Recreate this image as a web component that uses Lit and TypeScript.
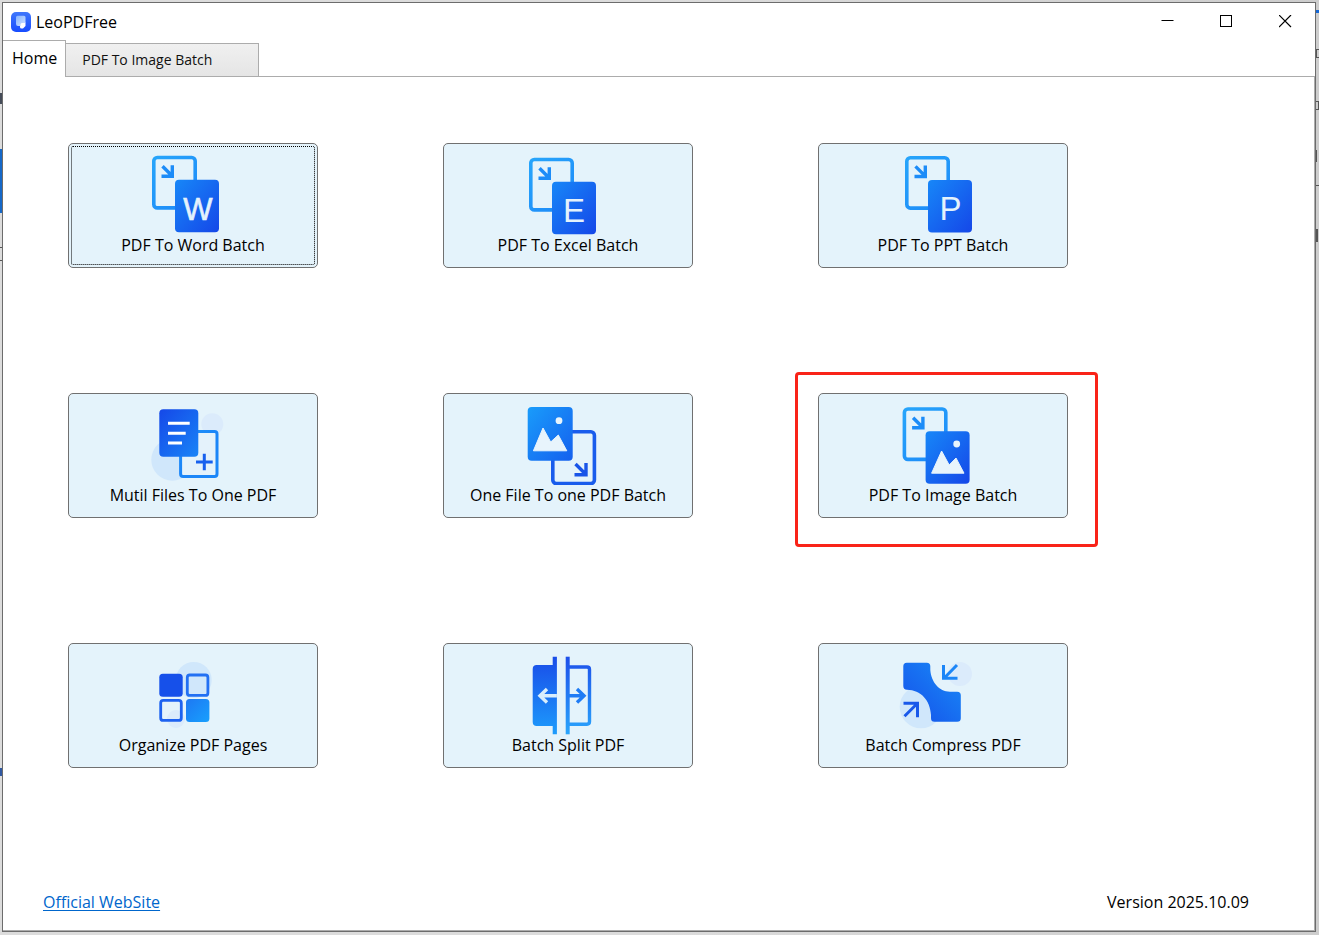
import { LitElement, html, svg, css, nothing } from "lit";
import { customElement, property, state } from "lit/decorators.js";

type Tool = { icon: string; label: string; marked?: boolean };

const TOOLS: Tool[] = [
  { icon: "word", label: "PDF To Word Batch" },
  { icon: "excel", label: "PDF To Excel Batch" },
  { icon: "ppt", label: "PDF To PPT Batch" },
  { icon: "merge", label: "Mutil Files To One PDF" },
  { icon: "single", label: "One File To one PDF Batch" },
  { icon: "image", label: "PDF To Image Batch", marked: true },
  { icon: "organize", label: "Organize PDF Pages" },
  { icon: "split", label: "Batch Split PDF" },
  { icon: "compress", label: "Batch Compress PDF" },
];

// Outlined page with an arrow, partly covered by a filled page.
const convertPages = (x: number, y: number) => svg`
  <g transform="translate(${x} ${y})">
    <rect x="1.8" y="1.8" width="41.4" height="50.4" rx="3.5" fill="none" stroke="url(#sky)" stroke-width="3.6"/>
    <path d="M10.5 10.5 20 20M20.3 9.5V20.6H9.5" fill="none" stroke="#1c8cf8" stroke-width="3.4"/>
    <rect x="23" y="24" width="44" height="52.6" rx="4" fill="url(#deep)"/>
  </g>`;

const ICONS: Record<string, unknown> = {
  word: svg`${convertPages(9, 2.7)}<text class="letter bold" x="54.8" y="67" font-size="31">W</text>`,
  excel: svg`${convertPages(11, 4.7)}<text class="letter" x="56" y="68.5" font-size="33">E</text>`,
  ppt: svg`${convertPages(12, 2.9)}<text class="letter" x="57.5" y="67" font-size="33">P</text>`,
  image: svg`${convertPages(9.6, 4.2)}
    <circle cx="63.7" cy="41" r="3.4" fill="#e8f4fc"/>
    <path d="M38.6 70.2 48.6 48 56.2 62 63 55 71 70.2Z" fill="#e8f4fc" stroke="#e8f4fc" stroke-width="1" stroke-linejoin="round"/>`,
  merge: svg`<g transform="translate(-2 0)">
    <circle cx="31.3" cy="56.7" r="21" fill="#d0e7fb"/>
    <circle cx="71.3" cy="21.3" r="11" fill="#dbebfb"/>
    <rect x="39.6" y="28.4" width="36.4" height="45" rx="2.5" fill="#e4f2fb" stroke="url(#sky)" stroke-width="3"/>
    <rect x="18.3" y="6.3" width="39" height="47.5" rx="4" fill="url(#rise)"/>
    <path d="M27 20.3H48.7M27 30.3H44.7M27 40H41" stroke="#fff" stroke-width="3"/>
    <path d="M55 59H71.7M63.3 50.7V67.3" stroke="#1760ee" stroke-width="3"/></g>`,
  single: svg`
    <rect x="34.8" y="28.8" width="41.6" height="51.8" rx="3.5" fill="none" stroke="#195cec" stroke-width="3.6"/>
    <rect x="9.7" y="4" width="45" height="53.8" rx="4" fill="url(#bright)"/>
    <circle cx="41" cy="17.7" r="3.4" fill="#e8f4fc"/>
    <path d="M15.4 47.8 25 25 32.7 39 40.3 32 48.8 47.8Z" fill="#e8f4fc" stroke="#e8f4fc" stroke-width="1" stroke-linejoin="round"/>
    <path d="M57.5 61 67.5 71M68 60V71.7H56.5" fill="none" stroke="#1854e8" stroke-width="3.4"/>`,
  organize: svg`<g transform="translate(-2 0)">
    <circle cx="52.7" cy="27" r="18" fill="#d0e7fb"/>
    <circle cx="35" cy="66" r="9" fill="#dbebfb"/>
    <rect x="18.3" y="20.7" width="23.4" height="23" rx="3.5" fill="#1650ea"/>
    <rect x="46.3" y="22" width="20.6" height="20.4" rx="2.5" fill="none" stroke="#2270f3" stroke-width="2.8"/>
    <rect x="19.7" y="47.4" width="20.6" height="20" rx="2.5" fill="none" stroke="#1d62f0" stroke-width="2.8"/>
    <rect x="45" y="46" width="23.4" height="23" rx="3.5" fill="url(#sq)"/></g>`,
  split: svg`
    <path d="M34.7 3.7H38.9V81.3H34.7V73H18.7Q14.7 73 14.7 69V16Q14.7 12 18.7 12H34.7Z" fill="url(#drop)"/>
    <path d="M49.7 3.7V81.3" stroke="url(#dropU)" stroke-width="4"/>
    <path d="M50 14H69Q71.5 14 71.5 16.5V68.5Q71.5 71.2 69 71.2H50" fill="none" stroke="url(#dropU)" stroke-width="3.4"/>
    <path d="M38.9 42.7H22.5M29 36 22 42.7 29 49.4" fill="none" stroke="#d9eefc" stroke-width="3.4"/>
    <path d="M50 42.7H66M59 36 66 42.7 59 49.4" fill="none" stroke="#1f7cf5" stroke-width="3.4"/>`,
  compress: svg`
    <circle cx="28" cy="54" r="21.3" fill="#d0e7fb"/>
    <circle cx="67" cy="21" r="12" fill="#dbebfb"/>
    <path d="M13.8 9.7H33.8Q37.3 9.7 37.3 13.2V17C38.3 29 46 38.7 57 38.7H64.2Q67.8 38.7 67.8 42.2V65.3Q67.8 68.8 64.2 68.8H41.5Q38 68.8 38 65.3V62C37 47 28 37 14 36.7Q10.3 36.5 10.3 33V13.2Q10.3 9.7 13.8 9.7Z" fill="url(#cross)"/>
    <path d="M64 12 51.5 24.8M50.5 12V25.3H64.5" fill="none" stroke="#1c86f7" stroke-width="3"/>
    <path d="M11.5 63.2 24 50.7M10.5 50.2H24.5V64.2" fill="none" stroke="#1858ea" stroke-width="3"/>`,
};

@customElement("tool-tile")
export class ToolTile extends LitElement {
  @property() icon = "";
  @property() label = "";
  @property({ type: Boolean, reflect: true }) marked = false;
  @property({ type: Boolean }) current = false;

  static styles = css`
    :host { display: block; position: relative; }
    :host([marked])::after {
      content: "";
      position: absolute;
      inset: -21px -30px -29px -23px;
      border: 3px solid #f92318;
      border-radius: 4px;
      pointer-events: none;
    }
    .tile {
      display: flex;
      flex-direction: column;
      align-items: center;
      box-sizing: border-box;
      width: 100%;
      min-height: 125px;
      padding: 9px 8px;
      border: 1px solid #707070;
      border-radius: 5px;
      background: #e4f3fb;
      color: #000;
      font: inherit;
      line-height: 20px;
      outline: none;
    }
    .current { outline: 1px dotted #000; outline-offset: -4px; }
    .tile svg { display: block; width: 100px; height: 82px; flex: none; }
    .letter { fill: #e4f2fc; text-anchor: middle; font-family: "Liberation Sans", Arial, sans-serif; }
    .bold { stroke: #e4f2fc; stroke-width: 0.6; }
  `;

  render() {
    return html`<button type="button" class="tile ${this.current ? "current" : ""}">
      <svg viewBox="0 0 100 82" aria-hidden="true">
        <defs>
          <linearGradient id="sky" gradientUnits="userSpaceOnUse" x1="0" y1="0" x2="50" y2="55"><stop stop-color="#27a6fb"/><stop offset="1" stop-color="#1b86f8"/></linearGradient>
          <linearGradient id="deep" x1="0" y1="0" x2="1" y2="1"><stop stop-color="#1787f8"/><stop offset="1" stop-color="#1547e8"/></linearGradient>
          <linearGradient id="rise" x1="0" y1="0" x2="1" y2="1"><stop stop-color="#1548e8"/><stop offset="1" stop-color="#1984f7"/></linearGradient>
          <linearGradient id="bright" x1="0" y1="0" x2="1" y2="1"><stop stop-color="#199cfb"/><stop offset="1" stop-color="#1560ee"/></linearGradient>
          <linearGradient id="sq" x1="0" y1="0" x2="1" y2="1"><stop stop-color="#1d78f3"/><stop offset="1" stop-color="#18a0fd"/></linearGradient>
          <linearGradient id="drop" x1="0" y1="0" x2="0" y2="1"><stop stop-color="#194ce8"/><stop offset="1" stop-color="#1d9cfc"/></linearGradient>
          <linearGradient id="dropU" gradientUnits="userSpaceOnUse" x1="0" y1="4" x2="0" y2="81"><stop stop-color="#1d50ea"/><stop offset="1" stop-color="#2aa5fc"/></linearGradient>
          <linearGradient id="cross" x1="0" y1="1" x2="1" y2="0"><stop stop-color="#154fe9"/><stop offset="1" stop-color="#198cf8"/></linearGradient>
        </defs>
        ${ICONS[this.icon] ?? nothing}
      </svg>
      <span>${this.label}</span>
    </button>`;
  }
}

@customElement("app-root")
export class AppRoot extends LitElement {
  @state() private tab = 0;

  static styles = css`
    :host {
      display: flex;
      position: relative;
      box-sizing: border-box;
      min-height: 100vh;
      padding: 2px 3px 3px 2px;
      overflow: hidden;
      background: linear-gradient(to right, #dcdcdc 50%, #cdcdcd);
      color: #000;
      font-family: "Open Sans", "Noto Sans", sans-serif;
      font-size: 16px;
      line-height: 20px;
    }
    .behind { position: absolute; inset: 0 0 0 auto; width: 3px; overflow: hidden; }
    .behind i { position: absolute; right: 0; box-sizing: border-box; width: 3px; border: 0 solid #555; }
    .behind .accent { top: 10px; height: 3px; background: #1668d6; }
    .behind .p1 { top: 49px; height: 9px; border-width: 1px 0 1px 1px; }
    .behind .p2 { top: 101px; height: 9px; border-width: 1px 1px 1px 0; }
    .behind .p3 { top: 150px; height: 12px; border-width: 0 0 0 1px; }
    .behind .p4 { top: 185px; height: 1px; border-width: 1px 0 0; }
    .behind .p5 { top: 229px; height: 13px; border-width: 0 0 0 2px; }
    .left { inset: 0 auto 0 0; width: 2px; }
    .left .q1 { top: 93px; height: 11px; background: #454c58; }
    .left .q2 { top: 149px; height: 64px; background: #1668c8; }
    .left .q3 { top: 247px; height: 14px; border-width: 1px 0; }
    .left .q4 { top: 768px; height: 8px; background: #3058a0; }
    .window {
      position: relative;
      display: flex;
      flex: 1;
      flex-direction: column;
      min-width: 0;
      border: 1px solid #6c6c6c;
      background: #fff;
    }
    header { display: flex; align-items: center; height: 37px; padding-left: 8px; }
    .logo { width: 20px; height: 20px; margin-right: 5px; }
    h1 { flex: 1; margin: 0; font-size: 16px; font-weight: 400; }
    .control { display: grid; place-items: center; width: 59px; height: 37px; padding: 0; border: 0; background: none; }
    .control svg { width: 13px; height: 13px; }
    .tabs { display: flex; align-items: flex-end; height: 37px; box-shadow: inset 0 -1px #acacac; }
    .tab {
      height: 34px;
      padding: 0 46px 0 16px;
      border: 1px solid #acacac;
      border-left: 0;
      background: linear-gradient(#f0f0f0, #e5e5e5);
      color: #111;
      font: inherit;
      font-size: 14px;
      text-align: left;
    }
    .home {
      height: 37px;
      padding: 0 8px 2px 9px;
      border-bottom: 0;
      background: #fff;
      color: #000;
      font-size: 16px;
    }
    main { flex: 1; padding: 66px 65px; border-right: 1px solid #acacac; }
    .grid { display: grid; grid-template-columns: repeat(3, minmax(0, 250px)); gap: 125px; }
    footer {
      display: flex;
      justify-content: space-between;
      padding: 0 65px 18px 40px;
      border-right: 1px solid #acacac;
      border-bottom: 1px solid #acacac;
    }
    a { color: #0066cc; text-underline-offset: 2px; }
  `;

  render() {
    return html`
      <div class="behind" aria-hidden="true">
        <i class="accent"></i><i class="p1"></i><i class="p2"></i><i class="p3"></i><i class="p4"></i><i class="p5"></i>
      </div>
      <div class="behind left" aria-hidden="true">
        <i class="q1"></i><i class="q2"></i><i class="q3"></i><i class="q4"></i>
      </div>
      <div class="window">
        <header>
          <svg class="logo" viewBox="0 0 20 20" aria-hidden="true">
            <defs>
              <linearGradient id="tile" x1="0" y1="0" x2="0" y2="1"><stop stop-color="#3f77fb"/><stop offset="1" stop-color="#174cff"/></linearGradient>
              <linearGradient id="page" x1="0" y1="0" x2="1" y2="1"><stop stop-color="#86b4ff"/><stop offset="1" stop-color="#cfe2ff"/></linearGradient>
            </defs>
            <rect width="20" height="20" rx="5" fill="url(#tile)"/>
            <path d="M9 10.5H14.5V14L12 16.5H10.5Q9 16.5 9 15Z" fill="#fff"/>
            <path d="M6.5 3.8H13Q14.5 3.8 14.5 5.3V11H11Q9.5 11 9.5 12.5V14H7Q5 14 5 12V5.3Q5 3.8 6.5 3.8Z" fill="url(#page)"/>
          </svg>
          <h1>LeoPDFree</h1>
          <button class="control" type="button" aria-label="Minimize"><svg viewBox="0 0 13 13"><path d="M.5 5.5H12.5" stroke="#000"/></svg></button>
          <button class="control" type="button" aria-label="Maximize"><svg viewBox="0 0 13 13"><rect x=".5" y=".5" width="11" height="11" fill="none" stroke="#000"/></svg></button>
          <button class="control" type="button" aria-label="Close"><svg viewBox="0 0 13 13"><path d="M0 0 12 12M12 0 0 12" stroke="#000" stroke-width="1.2"/></svg></button>
        </header>
        <div class="tabs" role="tablist">
          <button class="tab home" type="button" role="tab" aria-selected=${this.tab === 0} @click=${() => (this.tab = 0)}>Home</button>
          <button class="tab" type="button" role="tab" aria-selected=${this.tab === 1} @click=${() => (this.tab = 1)}>PDF To Image Batch</button>
        </div>
        <main>
          <div class="grid">
            ${TOOLS.map((t, i) => html`<tool-tile .icon=${t.icon} .label=${t.label} ?marked=${t.marked ?? false} ?current=${i === 0}></tool-tile>`)}
          </div>
        </main>
        <footer>
          <a href="#">Official WebSite</a>
          <span>Version 2025.10.09</span>
        </footer>
      </div>
    `;
  }
}
